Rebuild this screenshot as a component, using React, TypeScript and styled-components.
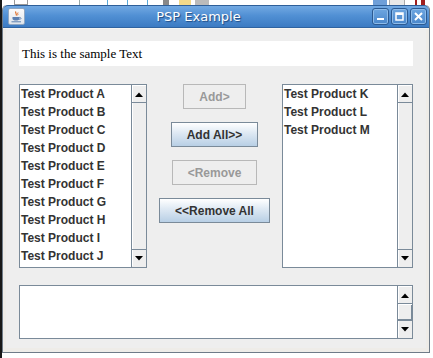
import React from 'react';
import styled, { createGlobalStyle } from 'styled-components';

const Global = createGlobalStyle`
  html, body { margin: 0; padding: 0; }
  body {
    width: 433px; height: 358px; overflow: hidden; background: #ffffff;
    font-family: "Liberation Sans", Arial, sans-serif;
  }
`;

const Desktop = styled.div`
  width: 433px;
  height: 358px;
  display: grid;
  grid-template-columns: 2px 428px 3px;
  grid-template-rows: 5px 348px 5px;
  background: #ffffff;
  overflow: hidden;
`;

const Strip = styled.div<{ $dark?: boolean }>`
  display: flex;
  align-items: stretch;
  background: ${p => (p.$dark ? '#1a1a1a' : '#ffffff')};
  overflow: hidden;
`;

const Piece = styled.div<{ $w: number; $bg: string; $ml?: number }>`
  width: ${p => p.$w}px;
  margin-left: ${p => p.$ml ?? 0}px;
  background: ${p => p.$bg};
  flex-shrink: 0;
`;

const SideStrip = styled.div<{ $light?: boolean }>`
  background: ${p => (p.$light ? '#ffffff' : '#181818')};
`;

const Window = styled.div`
  display: flex;
  flex-direction: column;
  background: #eeece8;
  border: 1px solid #6f7b88;
  border-top: none;
  border-radius: 5px 5px 0 0;
  overflow: hidden;
`;

const TitleBar = styled.div`
  height: 24px;
  display: flex;
  align-items: center;
  padding: 0 2px 0 5px;
  background: linear-gradient(#72a9e2 0%, #5190d4 45%, #3c7bc3 100%);
  border-top: 1px solid #2e5f99;
  border-bottom: 1px solid #2f63a0;
  border-radius: 5px 5px 0 0;
`;

const AppIcon = styled.div`
  width: 15px;
  height: 15px;
  border: 1px solid #8ea6c2;
  border-radius: 2px;
  background: linear-gradient(#fbfbfb, #dfe5ec);
  display: flex;
  align-items: center;
  justify-content: center;
`;

const Title = styled.div`
  flex: 1;
  text-align: center;
  color: #ffffff;
  font-family: "DejaVu Sans", Verdana, sans-serif;
  font-size: 13px;
  text-shadow: 1px 1px 1px #1f4a80;
`;

const Controls = styled.div`
  display: flex;
  gap: 2px;
`;

const CtlButton = styled.div`
  width: 15px;
  height: 15px;
  border: 1px solid #2c5a92;
  border-radius: 3px;
  background: linear-gradient(#6ea6e0, #4a87cb);
  box-shadow: inset 0 0 0 1px #8dbbe9;
  display: flex;
  align-items: center;
  justify-content: center;
`;

const Frame = styled.div`
  flex: 1;
  display: flex;
  padding: 0 3px 4px 3px;
  border-top: 1px solid #f6f5f2;
`;

const Content = styled.div`
  flex: 1;
  display: flex;
  flex-direction: column;
  background: #eeeeee;
  padding: 12px 13px 9px 13px;
`;

const TextField = styled.div`
  height: 25px;
  background: #ffffff;
  display: flex;
  align-items: center;
  padding-left: 3px;
  font-family: "Liberation Serif", "Times New Roman", serif;
  font-size: 13px;
  color: #000000;
`;

const Middle = styled.div`
  margin-top: 18px;
  display: grid;
  grid-template-columns: 128px 1fr 131px;
  height: 184px;
`;

const ListBox = styled.div`
  display: flex;
  border: 1px solid #7a8a99;
  background: #ffffff;
  min-height: 0;
`;

const Items = styled.div`
  flex: 1;
  display: flex;
  flex-direction: column;
  padding-left: 1px;
`;

const Item = styled.div`
  height: 18px;
  line-height: 18px;
  font-size: 12px;
  font-weight: bold;
  color: #333333;
  white-space: nowrap;
`;

const ScrollBar = styled.div`
  width: 14px;
  display: flex;
  flex-direction: column;
  background: #eeeeee;
  border-left: 1px solid #7a8a99;
`;

const ArrowButton = styled.div<{ $down?: boolean }>`
  height: 16px;
  flex-shrink: 0;
  display: flex;
  align-items: center;
  justify-content: center;
  background: #eeeeee;
  border-top: 1px solid ${p => (p.$down ? '#7a8a99' : '#ffffff')};
  border-bottom: 1px solid ${p => (p.$down ? '#eeeeee' : '#7a8a99')};
  box-shadow: inset 1px 0 0 #ffffff;
`;

const Track = styled.div`
  flex: 1;
  display: flex;
  flex-direction: column;
  box-shadow: inset 1px 0 0 #ffffff;
`;

const Thumb = styled.div`
  flex: 1;
  border-top: 1px solid #ffffff;
  border-bottom: 1px solid #7a8a99;
  box-shadow: inset 1px 0 0 #ffffff, inset -1px 0 0 #7a8a99;
  background: #eeeeee;
`;

const ButtonColumn = styled.div`
  display: flex;
  flex-direction: column;
  align-items: center;
  gap: 13px;
`;

const ActionButton = styled.button<{ $disabled?: boolean }>`
  height: 25px;
  padding: 0 15px;
  margin: 0;
  font-family: "Liberation Sans", Arial, sans-serif;
  font-size: 12px;
  font-weight: bold;
  color: ${p => (p.$disabled ? '#999999' : '#333333')};
  border: 1px solid ${p => (p.$disabled ? '#b8b8b8' : '#7a8a99')};
  background: ${p => (p.$disabled ? '#eeeeee' : 'linear-gradient(#ffffff 0%, #dde8f3 45%, #b8cfe5 100%)')};
  border-radius: 0;
  cursor: default;
`;

const TextArea = styled.div`
  margin-top: 17px;
  height: 52px;
  display: flex;
  border: 1px solid #7a8a99;
  background: #ffffff;
`;

const TextAreaBody = styled.div`
  flex: 1;
`;

const Arrow = ({ down }: { down?: boolean }) => (
  <svg width="8" height="5" viewBox="0 0 8 5">
    {down ? <polygon points="0,0 8,0 4,4.5" fill="#000" /> : <polygon points="0,5 8,5 4,0.5" fill="#000" />}
  </svg>
);

const VScroll = ({ thumb }: { thumb?: boolean }) => (
  <ScrollBar>
    <ArrowButton>
      <Arrow />
    </ArrowButton>
    <Track>{thumb && <Thumb />}</Track>
    <ArrowButton $down>
      <Arrow down />
    </ArrowButton>
  </ScrollBar>
);

const JavaIcon = () => (
  <svg width="11" height="12" viewBox="0 0 11 12">
    <path d="M5 0.5 C3.5 2 6.5 3 5 4.5" stroke="#e0702a" strokeWidth="1.2" fill="none" />
    <path d="M7 1.5 C6 2.5 7.5 3.2 6.6 4.3" stroke="#e0702a" strokeWidth="1" fill="none" />
    <path d="M1.5 6 H8.5 V7.6 C8.5 9 7 9.6 5 9.6 C3 9.6 1.5 9 1.5 7.6 Z" fill="#5b7fb0" />
    <path d="M8.5 6.4 C10.5 6.4 10.5 8.4 8.3 8.4" stroke="#5b7fb0" strokeWidth="0.9" fill="none" />
    <path d="M0.5 10.8 H10" stroke="#5b7fb0" strokeWidth="1" />
  </svg>
);

const leftItems = ['A', 'B', 'C', 'D', 'E', 'F', 'G', 'H', 'I', 'J'];
const rightItems = ['K', 'L', 'M'];

export default function App() {
  return (
    <>
      <Global />
      <Desktop>
        <Strip $dark />
        <Strip>
          <Piece $w={12} $bg="#ffffff" $ml={12} style={{ borderLeft: '1px solid #999', borderRight: '1px solid #999', borderBottom: '1px solid #999' }} />
          <Piece $w={1} $bg="#9aa" $ml={51} />
          <Piece $w={1} $bg="#5aa9d9" $ml={27} />
          <Piece $w={1} $bg="#5aa9d9" $ml={19} />
          <Piece $w={1} $bg="#5aa9d9" $ml={19} />
          <Piece $w={6} $bg="#888888" $ml={15} />
          <Piece $w={12} $bg="#f3d98a" $ml={10} />
          <Piece $w={14} $bg="#bbbbbb" $ml={4} />
          <Piece $w={14} $bg="#6f9fd8" $ml={164} />
          <Piece $w={14} $bg="#e8e8e8" $ml={2} style={{ borderLeft: '1px solid #aaa', borderRight: '1px solid #aaa' }} />
          <Piece $w={2} $bg="#a02020" $ml={10} />
          <Piece $w={4} $bg="#a02020" $ml={4} />
        </Strip>
        <Strip />
        <SideStrip />
        <Window>
          <TitleBar>
            <AppIcon>
              <JavaIcon />
            </AppIcon>
            <Title>PSP Example</Title>
            <Controls>
              <CtlButton>
                <svg width="9" height="9" viewBox="0 0 9 9">
                  <rect x="1" y="6" width="7" height="2" fill="#fff" />
                </svg>
              </CtlButton>
              <CtlButton>
                <svg width="9" height="9" viewBox="0 0 9 9">
                  <rect x="1" y="1" width="7" height="7" fill="none" stroke="#fff" strokeWidth="1.5" />
                  <rect x="1" y="1" width="7" height="2" fill="#fff" />
                </svg>
              </CtlButton>
              <CtlButton>
                <svg width="9" height="9" viewBox="0 0 9 9">
                  <path d="M1 1 L8 8 M8 1 L1 8" stroke="#fff" strokeWidth="2" />
                </svg>
              </CtlButton>
            </Controls>
          </TitleBar>
          <Frame>
            <Content>
              <TextField>This is the sample Text</TextField>
              <Middle>
                <ListBox>
                  <Items>
                    {leftItems.map(l => (
                      <Item key={l}>Test Product {l}</Item>
                    ))}
                  </Items>
                  <VScroll />
                </ListBox>
                <ButtonColumn>
                  <ActionButton $disabled>Add&gt;</ActionButton>
                  <ActionButton>Add All&gt;&gt;</ActionButton>
                  <ActionButton $disabled>&lt;Remove</ActionButton>
                  <ActionButton>&lt;&lt;Remove All</ActionButton>
                </ButtonColumn>
                <ListBox>
                  <Items>
                    {rightItems.map(l => (
                      <Item key={l}>Test Product {l}</Item>
                    ))}
                  </Items>
                  <VScroll />
                </ListBox>
              </Middle>
              <TextArea>
                <TextAreaBody />
                <VScroll thumb />
              </TextArea>
            </Content>
          </Frame>
        </Window>
        <SideStrip $light />
        <Strip $dark>
          <Piece $w={30} $bg="#1a1a1a" />
          <Piece $w={32} $bg="#ffffff" $ml={8} />
          <Piece $w={1} $bg="#5aa9d9" $ml={34} />
          <Piece $w={1} $bg="#5aa9d9" $ml={20} />
          <Piece $w={1} $bg="#5aa9d9" $ml={20} />
          <Piece $w={200} $bg="#ffffff" $ml={10} />
          <Piece $w={14} $bg="#6f9fd8" $ml={15} />
          <Piece $w={14} $bg="#e8e8e8" $ml={2} />
          <Piece $w={20} $bg="#ffffff" $ml={0} />
        </Strip>
        <Strip />
        <Strip />
      </Desktop>
    </>
  );
}
